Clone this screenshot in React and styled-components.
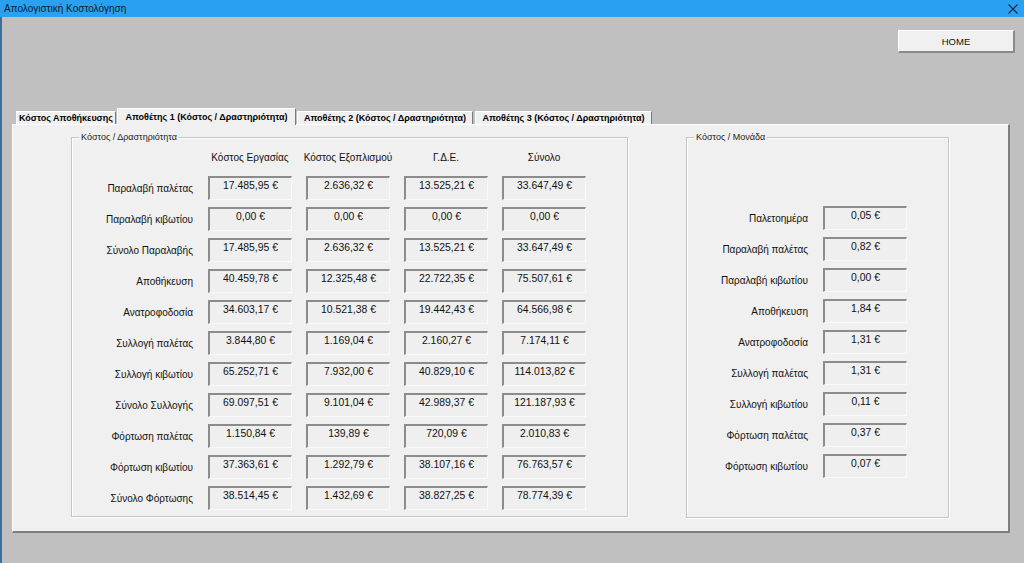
import React from "react";
import styled, { createGlobalStyle } from "styled-components";

const Global = createGlobalStyle`
  html, body { margin: 0; padding: 0; background: #c0c0c0; overflow: hidden; }
  * { box-sizing: border-box; }
`;

const Window = styled.div`
  width: 1024px;
  height: 563px;
  display: flex;
  flex-direction: column;
  background: #c0c0c0;
  font-family: "Liberation Sans", Arial, sans-serif;
  color: #000;
`;

const TitleBar = styled.div`
  height: 17px;
  background: #2aa1f0;
  display: flex;
  align-items: center;
  justify-content: space-between;
  padding: 0 6px 0 4px;
  font-size: 10px;
  color: #0b1a2e;
`;

const CloseIcon = () => (
  <svg width="10" height="10" viewBox="0 0 10 10">
    <path d="M0.5 0.5 L9.5 9.5 M9.5 0.5 L0.5 9.5" stroke="#1a2a40" strokeWidth="1.1" fill="none" />
  </svg>
);

const Client = styled.div`
  flex: 1;
  border-left: 2px solid #3b6f9e;
  padding: 13px 9px 0 0;
  display: flex;
  flex-direction: column;
`;

const HomeRow = styled.div`
  display: flex;
  justify-content: flex-end;
`;

const HomeButton = styled.button`
  width: 117px;
  height: 23px;
  background: #f0f0f0;
  border: none;
  border-top: 1px solid #ffffff;
  border-left: 1px solid #ffffff;
  border-right: 2px solid #8a8a8a;
  border-bottom: 2px solid #8a8a8a;
  font-family: "Liberation Sans", Arial, sans-serif;
  font-size: 9.5px;
  color: #111;
  padding: 0;
`;

const TabArea = styled.div`
  margin: 55px 0 0 10px;
  display: flex;
  flex-direction: column;
`;

const TabStrip = styled.div`
  display: flex;
  align-items: flex-end;
  height: 16px;
  padding-left: 4px;
  position: relative;
  z-index: 1;
`;

const Tab = styled.div`
  height: ${(p) => (p.$active ? "17px" : "13px")};
  margin-bottom: ${(p) => (p.$active ? "-1px" : "0")};
  width: ${(p) => p.$w}px;
  margin-left: ${(p) => p.$gap || 0}px;
  background: #f0f0f0;
  border-top: 1px solid #ffffff;
  border-left: 1px solid #ffffff;
  border-right: 1px solid #7a7a7a;
  display: flex;
  align-items: center;
  justify-content: center;
  font-size: 9px;
  font-weight: bold;
  white-space: nowrap;
  overflow: hidden;
  color: #000;
`;

const Panel = styled.div`
  width: 998px;
  height: 409px;
  background: #f0f0f0;
  border-top: 1px solid #ffffff;
  border-left: 1px solid #ffffff;
  border-right: 2px solid #7e7e7e;
  border-bottom: 2px solid #7e7e7e;
  padding: 12px 0 0 58px;
  display: flex;
  gap: 58px;
  align-items: flex-start;
`;

const Group = styled.div`
  position: relative;
  width: ${(p) => p.$w}px;
  height: ${(p) => p.$h}px;
  border: 1px solid #c4c4c4;
  box-shadow: inset 1px 1px 0 #ffffff, 1px 1px 0 #ffffff;
  padding-top: ${(p) => p.$pt}px;
`;

const Legend = styled.span`
  position: absolute;
  top: -6px;
  left: 7px;
  padding: 0 2px;
  background: #f0f0f0;
  font-size: 9px;
  line-height: 11px;
  color: #222;
`;

const Grid = styled.div`
  display: grid;
  grid-template-columns: 136px repeat(${(p) => p.$cols}, 98px);
  grid-auto-rows: 24px;
  row-gap: 7px;
`;

const Header = styled.div`
  display: flex;
  align-items: center;
  justify-content: center;
  width: 84px;
  font-size: 10px;
  color: #111;
  white-space: nowrap;
`;

const Label = styled.div`
  display: flex;
  align-items: center;
  justify-content: flex-end;
  padding-right: 15px;
  padding-top: 1px;
  font-size: 10px;
  color: #111;
  white-space: nowrap;
`;

const ValueBox = styled.div`
  width: 84px;
  height: 24px;
  background: #efefef;
  border-top: 2px solid #8c8c8c;
  border-left: 2px solid #8c8c8c;
  border-right: 1px solid #f9f9f9;
  border-bottom: 1px solid #f9f9f9;
  text-align: center;
  font-size: 10.4px;
  line-height: 12px;
  padding-top: 2px;
  color: #111;
  white-space: nowrap;
`;

const activityRows = [
  ["Παραλαβή παλέτας", "17.485,95 €", "2.636,32 €", "13.525,21 €", "33.647,49 €"],
  ["Παραλαβή κιβωτίου", "0,00 €", "0,00 €", "0,00 €", "0,00 €"],
  ["Σύνολο Παραλαβής", "17.485,95 €", "2.636,32 €", "13.525,21 €", "33.647,49 €"],
  ["Αποθήκευση", "40.459,78 €", "12.325,48 €", "22.722,35 €", "75.507,61 €"],
  ["Ανατροφοδοσία", "34.603,17 €", "10.521,38 €", "19.442,43 €", "64.566,98 €"],
  ["Συλλογή παλέτας", "3.844,80 €", "1.169,04 €", "2.160,27 €", "7.174,11 €"],
  ["Συλλογή κιβωτίου", "65.252,71 €", "7.932,00 €", "40.829,10 €", "114.013,82 €"],
  ["Σύνολο Συλλογής", "69.097,51 €", "9.101,04 €", "42.989,37 €", "121.187,93 €"],
  ["Φόρτωση παλέτας", "1.150,84 €", "139,89 €", "720,09 €", "2.010,83 €"],
  ["Φόρτωση κιβωτίου", "37.363,61 €", "1.292,79 €", "38.107,16 €", "76.763,57 €"],
  ["Σύνολο Φόρτωσης", "38.514,45 €", "1.432,69 €", "38.827,25 €", "78.774,39 €"],
];

const unitRows = [
  ["Παλετοημέρα", "0,05 €"],
  ["Παραλαβή παλέτας", "0,82 €"],
  ["Παραλαβή κιβωτίου", "0,00 €"],
  ["Αποθήκευση", "1,84 €"],
  ["Ανατροφοδοσία", "1,31 €"],
  ["Συλλογή παλέτας", "1,31 €"],
  ["Συλλογή κιβωτίου", "0,11 €"],
  ["Φόρτωση παλέτας", "0,37 €"],
  ["Φόρτωση κιβωτίου", "0,07 €"],
];

const headers = ["Κόστος Εργασίας", "Κόστος Εξοπλισμού", "Γ.Δ.Ε.", "Σύνολο"];

export default function App() {
  return (
    <>
      <Global />
      <Window>
        <TitleBar>
          <span>Απολογιστική Κοστολόγηση</span>
          <CloseIcon />
        </TitleBar>
        <Client>
          <HomeRow>
            <HomeButton>HOME</HomeButton>
          </HomeRow>
          <TabArea>
            <TabStrip>
              <Tab $w={100}>Κόστος Αποθήκευσης</Tab>
              <Tab $w={179} $gap={1} $active>Αποθέτης 1 (Κόστος / Δραστηριότητα)</Tab>
              <Tab $w={176} $gap={1}>Αποθέτης 2 (Κόστος / Δραστηριότητα)</Tab>
              <Tab $w={177} $gap={2}>Αποθέτης 3 (Κόστος / Δραστηριότητα)</Tab>
            </TabStrip>
            <Panel>
              <Group $w={557} $h={380} $pt={7}>
                <Legend>Κόστος / Δραστηριότητα</Legend>
                <Grid $cols={4}>
                  <div />
                  {headers.map((h) => (
                    <Header key={h}>{h}</Header>
                  ))}
                  {activityRows.map((r) => (
                    <React.Fragment key={r[0]}>
                      <Label>{r[0]}</Label>
                      {r.slice(1).map((v, i) => (
                        <ValueBox key={i}>{v}</ValueBox>
                      ))}
                    </React.Fragment>
                  ))}
                </Grid>
              </Group>
              <Group $w={263} $h={381} $pt={68}>
                <Legend>Κόστος / Μονάδα</Legend>
                <Grid $cols={1}>
                  {unitRows.map((r) => (
                    <React.Fragment key={r[0]}>
                      <Label>{r[0]}</Label>
                      <ValueBox>{r[1]}</ValueBox>
                    </React.Fragment>
                  ))}
                </Grid>
              </Group>
            </Panel>
          </TabArea>
        </Client>
      </Window>
    </>
  );
}
